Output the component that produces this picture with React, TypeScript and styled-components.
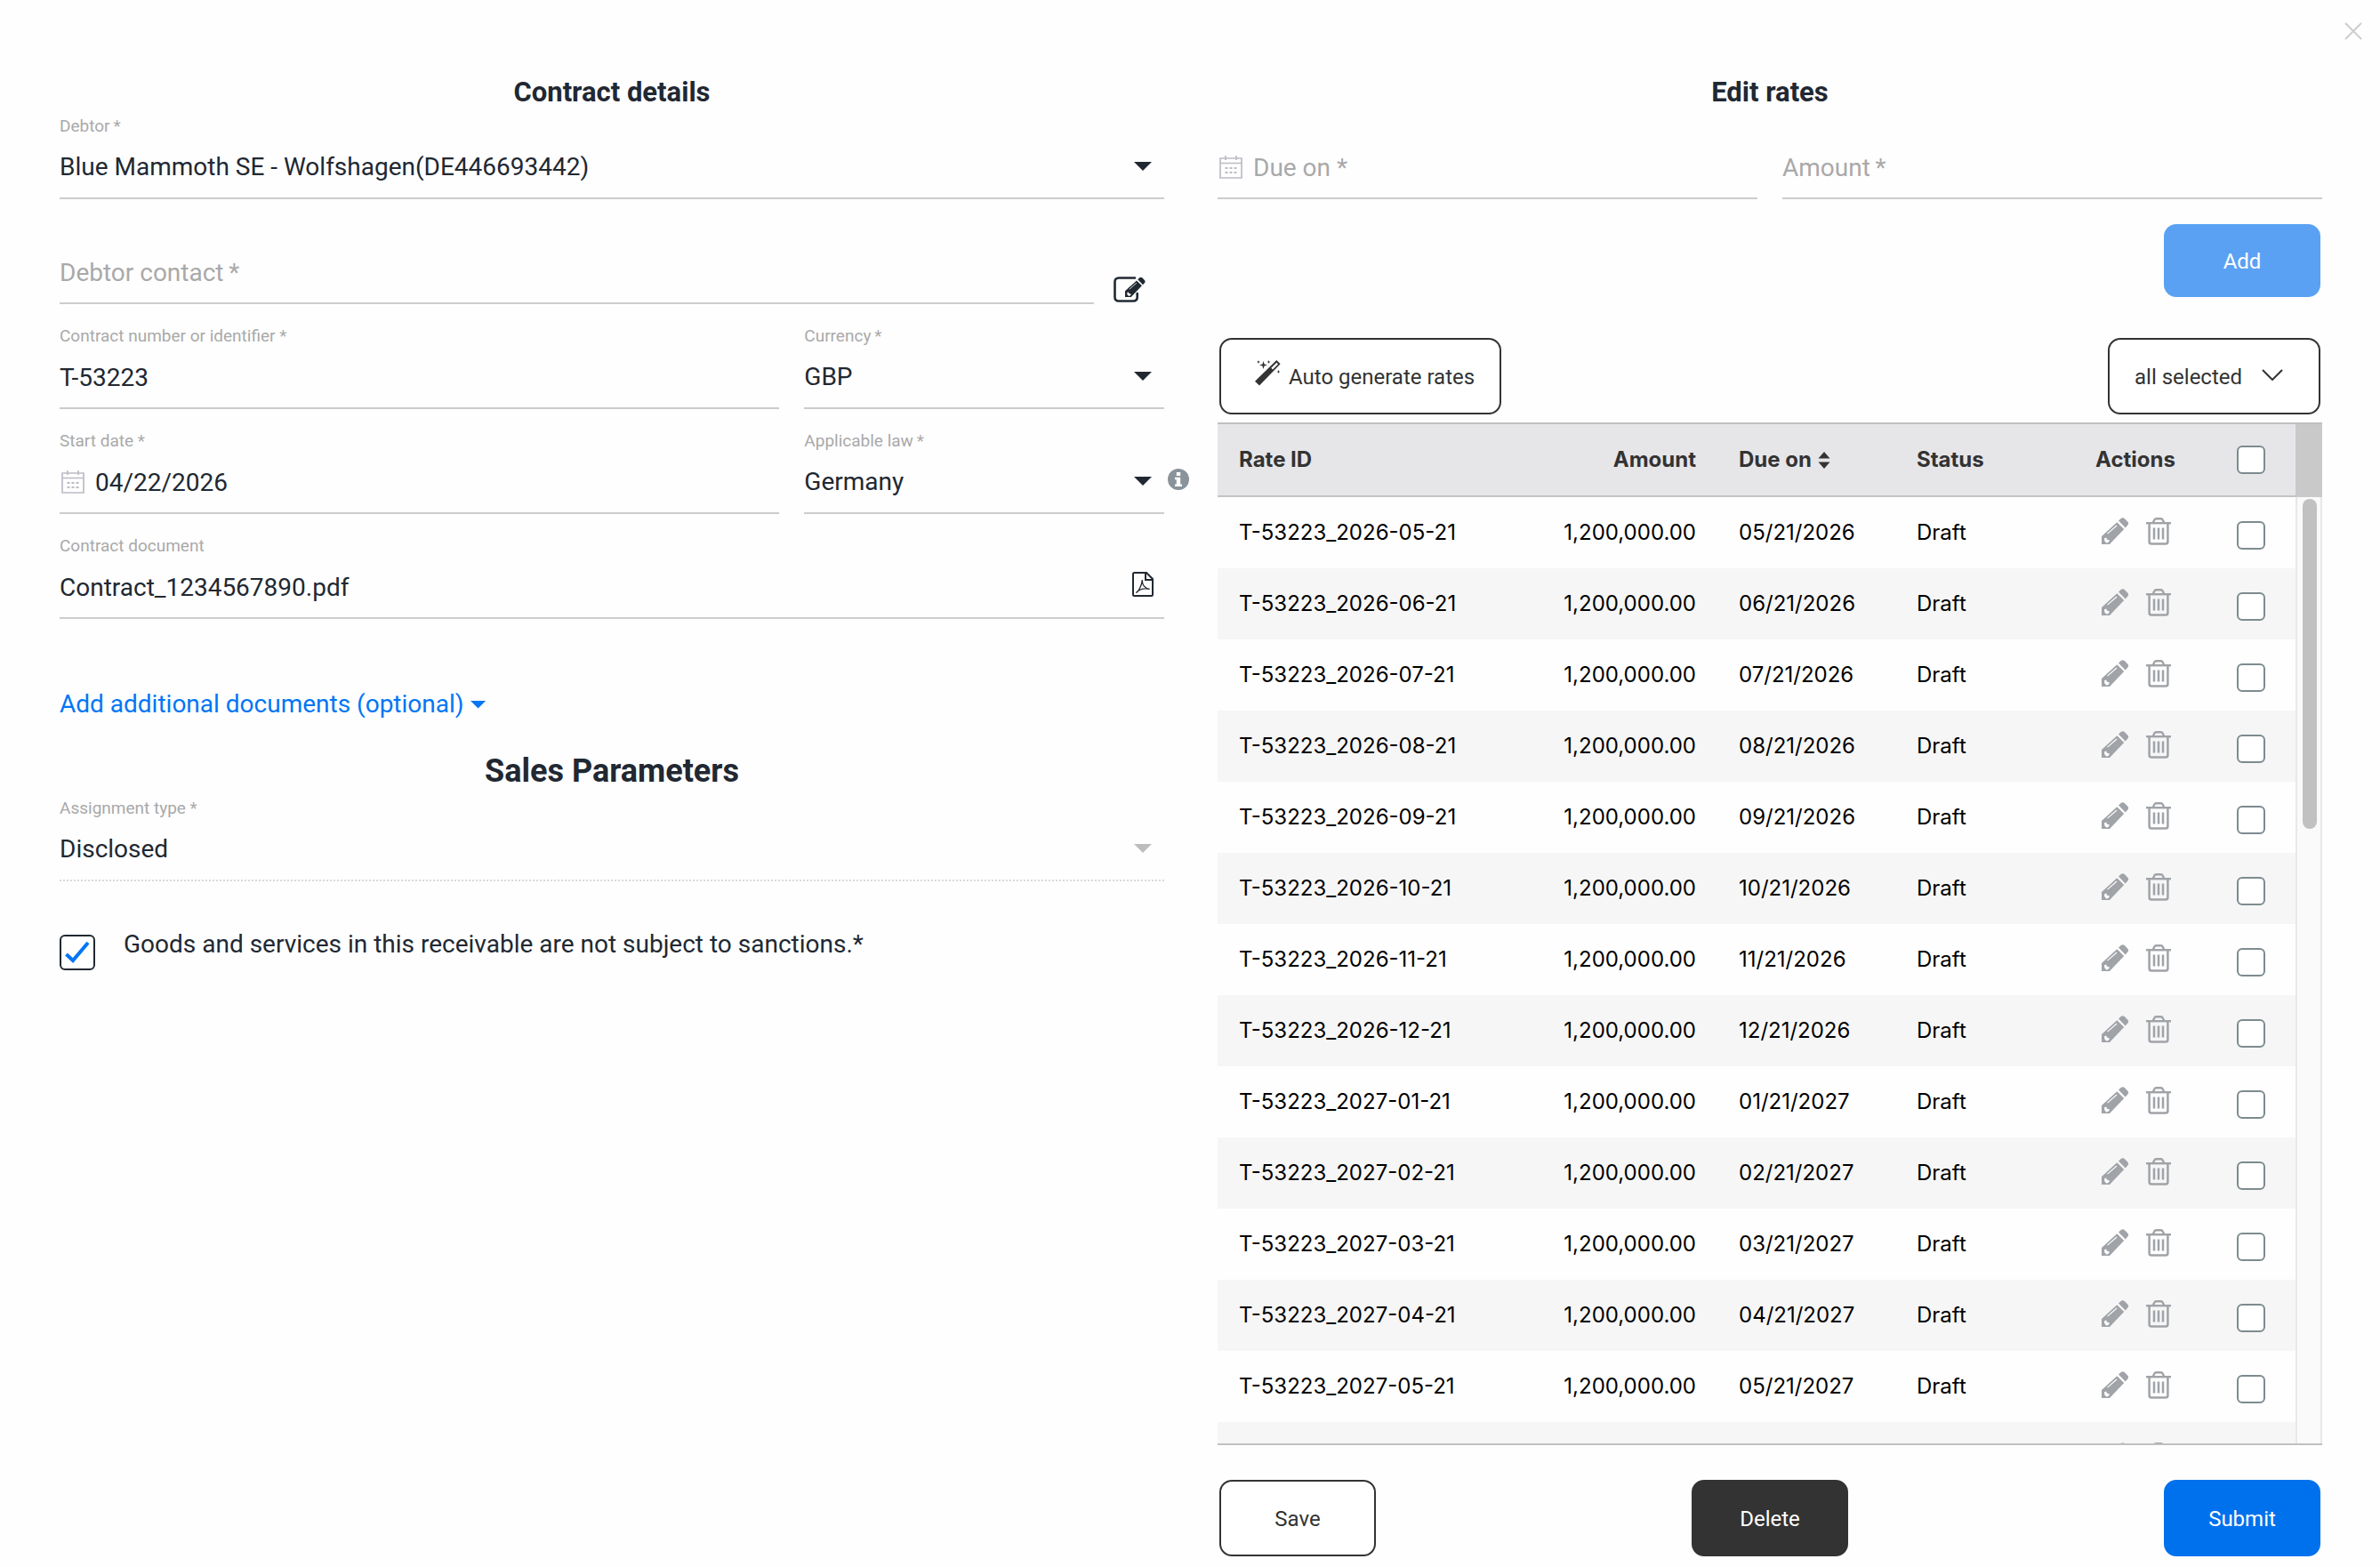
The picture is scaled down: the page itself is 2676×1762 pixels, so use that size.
import React, { useState } from "react";
import styled, { createGlobalStyle } from "styled-components";

const ink = "#212832";
const charcoal = "#333333";
const blue = "#0071ed";
const muted = "#a9a9a9";
const rule = "#cccccc";

const GlobalStyle = createGlobalStyle`
  *, *::before, *::after { box-sizing: border-box; }
  body {
    margin: 0;
    background: #fefefe;
    color: ${ink};
    font-family: Roboto, "Liberation Sans", sans-serif;
    font-size: 28px;
    line-height: 32px;
  }
  button, input, select { font: inherit; color: inherit; }
  button { cursor: pointer; }
`;

const Page = styled.main`
  display: flex;
  flex-direction: column;
  height: 100vh;
  min-height: 1200px;
`;

const TopBar = styled.header`
  display: flex;
  justify-content: flex-end;
  height: 84px;
  padding: 20px 15px;
`;

const IconButton = styled.button`
  display: inline-flex;
  align-items: center;
  justify-content: center;
  padding: 0;
  border: 0;
  background: none;
`;

const CloseButton = styled(IconButton)`
  width: 30px;
  height: 30px;
  color: #cdcdd1;
`;

const Columns = styled.div`
  flex: 1;
  min-height: 0;
  display: grid;
  grid-template-columns: repeat(2, minmax(0, 1fr));
  gap: 60px;
  padding: 0 65px 12px 67px;
`;

const Panel = styled.section`
  display: flex;
  flex-direction: column;
  min-height: 0;
`;

const Heading = styled.h2`
  margin: 0 0 6px;
  font-size: 31px;
  line-height: 40px;
  font-weight: 700;
  text-align: center;
`;

const SubHeading = styled(Heading)`
  margin: 37px 0 8px;
  font-size: 36px;
  line-height: 44px;
`;

const Fields = styled.div`
  display: grid;
  gap: 24px;
`;

const FieldRow = styled.div<{ $columns: string }>`
  display: grid;
  grid-template-columns: ${(p) => p.$columns};
  column-gap: 28px;
`;

const FieldBox = styled.div`
  position: relative;
  display: grid;
  grid-template-rows: 24px 68px;
  border-bottom: 2px solid ${rule};
`;

const DisabledFieldBox = styled(FieldBox)`
  border-bottom: 2px dotted #d9d9d9;
`;

const FieldLabel = styled.label`
  color: ${muted};
  font-size: 19px;
  line-height: 24px;
`;

const Control = styled.div`
  grid-row: 2;
  display: flex;
  align-items: center;
`;

const TextInput = styled.input`
  flex: 1;
  min-width: 0;
  height: 68px;
  padding: 0;
  border: 0;
  outline: 0;
  background: none;
  &::placeholder { color: ${muted}; opacity: 1; }
`;

const SelectInput = styled.select`
  flex: 1;
  min-width: 0;
  height: 68px;
  padding: 0;
  border: 0;
  outline: 0;
  background: none;
  appearance: none;
  &:disabled { color: ${ink}; opacity: 1; }
`;

const Caret = styled.span<{ $muted?: boolean }>`
  width: 20px;
  height: 10px;
  margin: 0 14px 2px 0;
  background: ${(p) => (p.$muted ? "#bdbdbd" : ink)};
  clip-path: polygon(0 0, 100% 0, 50% 100%);
  pointer-events: none;
`;

const CalendarSlot = styled.span`
  display: flex;
  width: 40px;
  padding-left: 2px;
  color: #bcbdc5;
`;

const FileSlot = styled.span`
  display: flex;
  margin: 0 12px 6px 0;
`;

const InfoButton = styled(IconButton)`
  position: absolute;
  left: 100%;
  bottom: 25px;
  margin-left: 4px;
  color: #8a929a;
`;

const ContactRow = styled.div`
  display: grid;
  grid-template-columns: 1fr 79px;
  align-items: end;
`;

const EditButton = styled(IconButton)`
  height: 34px;
`;

const MoreLink = styled.a`
  display: inline-flex;
  align-items: center;
  align-self: flex-start;
  gap: 7px;
  margin-top: 80px;
  color: #0076f5;
  text-decoration: none;
`;

const LinkCaret = styled.span`
  width: 18px;
  height: 9px;
  background: currentColor;
  clip-path: polygon(0 0, 100% 0, 50% 100%);
`;

const ConsentRow = styled.div`
  display: flex;
  gap: 32px;
  margin-top: 55px;
`;

const CheckBox = styled.input`
  appearance: none;
  flex: none;
  width: 32px;
  height: 32px;
  margin: 0;
  border: 2px solid #7d8b8f;
  border-radius: 6px;
  background: #ffffff;
  vertical-align: middle;
  &:checked {
    background: #ffffff url("data:image/svg+xml,%3Csvg xmlns='http://www.w3.org/2000/svg' viewBox='0 0 36 36'%3E%3Cpath d='M5.500 20l7.500 7 17-20' fill='none' stroke='%230076f5' stroke-width='4'/%3E%3C/svg%3E") center / 100% no-repeat;
  }
`;

const ConsentBox = styled(CheckBox)`
  width: 40px;
  height: 40px;
  margin-top: 5px;
  border-color: ${ink};
`;

const Button = styled.button<{ $tone?: "outline" | "dark" | "primary" }>`
  display: inline-flex;
  align-items: center;
  justify-content: center;
  min-width: 176px;
  height: 86px;
  padding: 2px 28px 0;
  border: 2px solid ${(p) => (p.$tone === "primary" ? blue : charcoal)};
  border-radius: 14px;
  background: ${(p) =>
    p.$tone === "primary" ? blue : p.$tone === "dark" ? charcoal : "#ffffff"};
  color: ${(p) => (p.$tone ? "#ffffff" : charcoal)};
  font-size: 24px;
  line-height: 28px;
`;

const AddRow = styled.div`
  display: flex;
  justify-content: flex-end;
  margin-top: 28px;
  padding: 0 2px;
`;

const AddButton = styled(Button)`
  height: 82px;
  border: 0;
  background: #5aa1f3;
  &:disabled { cursor: default; }
`;

const Toolbar = styled.div`
  display: flex;
  justify-content: space-between;
  margin: 46px 0 9px;
  padding: 0 2px;
`;

const GenerateButton = styled(Button)`
  gap: 9px;
  padding: 2px 28px 0 38px;
`;

const WandSlot = styled.span`
  display: flex;
  margin-bottom: 10px;
`;

const FilterBox = styled.div`
  display: grid;
  align-items: center;
  width: 239px;
  height: 86px;
  border: 2px solid ${charcoal};
  border-radius: 14px;
  background: #ffffff;
  color: ${charcoal};
  font-size: 24px;
  line-height: 28px;
  & > * { grid-area: 1 / 1; }
`;

const FilterSelect = styled.select`
  height: 82px;
  padding: 2px 28px 0;
  border: 0;
  outline: 0;
  background: none;
  appearance: none;
`;

const ChevronSlot = styled.span`
  display: flex;
  justify-self: end;
  margin: 0 40px 4px 0;
  pointer-events: none;
`;

const TableFrame = styled.div`
  flex: 1;
  min-height: 0;
  display: grid;
  grid-template-columns: 1fr 30px;
  border: solid #c0c0c0;
  border-width: 2px 0;
`;

const ScrollArea = styled.div`
  min-height: 0;
  overflow-y: auto;
  scrollbar-width: none;
`;

const Rail = styled.div`
  display: grid;
  grid-template-rows: 82px 1fr;
  min-height: 0;
`;

const RailHead = styled.div`
  background: #c9c9c9;
`;

const RailTrack = styled.div`
  padding: 2px 4px 2px 6px;
  border: solid #e8e8e8;
  border-width: 0 2px;
  background: #fafafa;
`;

const RailThumb = styled.div`
  height: 35%;
  border-radius: 8px;
  background: #c1c1c1;
`;

const Table = styled.table`
  width: 100%;
  border-collapse: separate;
  border-spacing: 0;
  table-layout: fixed;
  color: #000000;
  font-family: Inter, "Liberation Sans", sans-serif;
  font-size: 24px;
  line-height: 30px;
`;

type Align = "left" | "right" | "center";

const HeadCell = styled.th<{ $align?: Align; $width?: number }>`
  position: sticky;
  top: 0;
  width: ${(p) => (p.$width ? `${p.$width}px` : "auto")};
  height: 82px;
  padding: 0 24px;
  border-bottom: 2px solid #c4c4c4;
  background: #e6e6e9;
  color: ${charcoal};
  font-weight: 700;
  text-align: ${(p) => p.$align ?? "left"};
`;

const BodyRow = styled.tr`
  &:nth-child(even) { background: #f6f6f6; }
`;

const Cell = styled.td<{ $align?: Align }>`
  height: 80px;
  padding: 0 24px;
  text-align: ${(p) => p.$align ?? "left"};
  white-space: nowrap;
`;

const CheckCell = styled(Cell)`
  padding-top: 6px;
`;

const SortButton = styled(IconButton)`
  gap: 7px;
  font-weight: 700;
`;

const Actions = styled.div`
  display: flex;
  justify-content: center;
  gap: 19px;
  padding: 0 0 4px 2px;
  color: #a0a3a8;
`;

const Footer = styled.footer`
  display: flex;
  justify-content: space-between;
  margin-top: 39px;
  padding: 0 2px;
`;

const CloseIcon = () => (
  <svg width="20" height="20" viewBox="0 0 20 20" stroke="currentColor" strokeWidth="2" strokeLinecap="round" aria-hidden="true">
    <path d="M1.500 1.500l17 17M18.500 1.500l-17 17" />
  </svg>
);

const CalendarIcon = () => (
  <svg width="26" height="26" viewBox="0 0 26 26" fill="none" stroke="currentColor" strokeWidth="1.700" aria-hidden="true">
    <path d="M1 3h24v22H1zM1 8.500h24M7 0v5M19 0v5" />
    <path d="M6.500 14h3m2 0h3m2 0h3M6.500 19h3m2 0h3m2 0h3" strokeWidth="2" />
  </svg>
);

const PencilShape = () => (
  <>
    <path d="M17.300 5.200L25.200 13 9 30H0v-9z" fill="currentColor" />
    <path d="M19 3.600l2.700-2.500c1.300-1.200 2.700-1.200 4 0l3.400 3.400c1.300 1.300 1.300 2.700.2 4l-2.600 3z" fill="currentColor" />
    <path d="M6.500 18.200L17 9" stroke="#fff" strokeWidth="1.100" />
    <path d="M3 23.300l2.300-.8.600 2.200 2.500.3.200 2-2.800 1.700-2.400-2.200z" fill="#fff" />
  </>
);

const PencilIcon = () => (
  <svg width="31" height="31" viewBox="0 0 31 31" aria-hidden="true">
    <PencilShape />
  </svg>
);

const TrashIcon = () => (
  <svg width="28" height="31" viewBox="0 0 28 31" fill="none" stroke="currentColor" aria-hidden="true">
    <path d="M0 6.200h28" strokeWidth="2.400" />
    <path d="M8 5.500l1.200-2.700C9.700 1.600 10.300 1.200 11.500 1.200h5c1.200 0 1.800.4 2.300 1.600L20 5.500" strokeWidth="2.400" />
    <path d="M3.600 7v20c0 1.800.9 2.600 2.600 2.600h15.600c1.700 0 2.600-.8 2.600-2.600V7" strokeWidth="2.500" />
    <path d="M9 11.500V24.500M14 11.500V24.500M19 11.500V24.500" strokeWidth="2.500" />
  </svg>
);

const EditIcon = () => (
  <svg width="36" height="29" viewBox="0 0 36 29" aria-hidden="true">
    <path d="M24 1.500H6C3 1.500 1.500 3 1.500 6v17c0 3 1.500 4.500 4.500 4.500h16c3 0 4.700-1.500 4.700-4.500v-4" fill="none" stroke="currentColor" strokeWidth="2.600" strokeLinecap="round" />
    <g transform="translate(13 0.500) scale(0.750)">
      <PencilShape />
    </g>
  </svg>
);

const InfoIcon = () => (
  <svg width="24" height="24" viewBox="0 0 24 24" aria-hidden="true">
    <circle cx="12" cy="12" r="12" fill="currentColor" />
    <path d="M9.800 4h4.400v4H9.800zM8 9.800h6.200v7.700H16V20H8v-2.500h1.800v-5.200H8z" fill="#fff" />
  </svg>
);

const PdfIcon = () => (
  <svg width="24" height="28" viewBox="0 0 24 28" fill="none" stroke="currentColor" aria-hidden="true">
    <path d="M2.500 1H16l7 7v17.500c0 1-.5 1.500-1.500 1.500h-19C1.500 27 1 26.500 1 25.500v-23C1 1.500 1.500 1 2.500 1zM15 1v8h8" strokeWidth="2" />
    <path d="M4.300 23.500c2.700-1 6.700-8.300 7-14.500M11.300 9c-.4 5.800 3.200 10 8.300 10.300M4.300 23.500c4.200-4.300 9-5.500 15.300-4.200" strokeWidth="1.300" />
  </svg>
);

const WandIcon = () => (
  <svg width="29" height="29" viewBox="0 0 29 29" fill="currentColor" aria-hidden="true">
    <path d="M24.300 0L28.600 4.300 5 28.600 0 23.800zM24.300 2.700l-6 6.100 1.700 1.700 6-6.100z" fillRule="evenodd" />
    <path d="M9.500 1l1.100 3.400L14 5.500l-3.400 1.100L9.500 10 8.400 6.600 5 5.500l3.400-1.100z" />
    <path d="M4 0l.6 1.400L6 2l-1.400.6L4 4l-.6-1.400L2 2l1.400-.6zM15.500 0l.6 1.400 1.400.6-1.400.6-.6 1.400-.6-1.400L13.500 2l1.400-.6zM26.500 11l.6 1.400 1.400.6-1.400.6-.6 1.400-.6-1.400-1.400-.6 1.400-.6z" />
  </svg>
);

const ChevronIcon = () => (
  <svg width="24" height="13" viewBox="0 0 24 13" fill="none" stroke="currentColor" strokeWidth="2" aria-hidden="true">
    <path d="M1 1l11 11L23 1" />
  </svg>
);

const SortIcon = () => (
  <svg width="14" height="19" viewBox="0 0 14 19" fill="currentColor" aria-hidden="true">
    <path d="M7 0l6.500 7.500h-13zM7 19L.5 11.500h13z" />
  </svg>
);

interface SelectFieldProps {
  id: string;
  label: string;
  value: string;
  disabled?: boolean;
  children?: React.ReactNode;
}

function SelectField({ id, label, value, disabled, children }: SelectFieldProps) {
  const Box = disabled ? DisabledFieldBox : FieldBox;
  return (
    <Box>
      <FieldLabel htmlFor={id}>{label}</FieldLabel>
      <Control>
        <SelectInput id={id} defaultValue={value} disabled={disabled}>
          <option>{value}</option>
        </SelectInput>
        <Caret $muted={disabled} />
      </Control>
      {children}
    </Box>
  );
}

interface TextFieldProps {
  id: string;
  label?: string;
  value?: string;
  placeholder?: string;
  before?: React.ReactNode;
  after?: React.ReactNode;
}

function TextField({ id, label, value, placeholder, before, after }: TextFieldProps) {
  return (
    <FieldBox>
      {label && <FieldLabel htmlFor={id}>{label}</FieldLabel>}
      <Control>
        {before}
        <TextInput
          id={id}
          type="text"
          defaultValue={value}
          placeholder={placeholder}
          aria-label={label ? undefined : placeholder}
        />
        {after}
      </Control>
    </FieldBox>
  );
}

const rates = [
  ["2026-05-21", "05/21/2026"],
  ["2026-06-21", "06/21/2026"],
  ["2026-07-21", "07/21/2026"],
  ["2026-08-21", "08/21/2026"],
  ["2026-09-21", "09/21/2026"],
  ["2026-10-21", "10/21/2026"],
  ["2026-11-21", "11/21/2026"],
  ["2026-12-21", "12/21/2026"],
  ["2027-01-21", "01/21/2027"],
  ["2027-02-21", "02/21/2027"],
  ["2027-03-21", "03/21/2027"],
  ["2027-04-21", "04/21/2027"],
  ["2027-05-21", "05/21/2027"],
  ["2027-06-21", "06/21/2027"],
].map(([date, due]) => ({ id: `T-53223_${date}`, amount: "1,200,000.00", due, status: "Draft" }));

function RatesTable() {
  const [selected, setSelected] = useState<string[]>([]);
  const toggle = (id: string) =>
    setSelected((ids) => (ids.includes(id) ? ids.filter((i) => i !== id) : [...ids, id]));
  const allSelected = selected.length === rates.length;

  return (
    <TableFrame>
      <ScrollArea>
        <Table>
          <thead>
            <tr>
              <HeadCell>Rate ID</HeadCell>
              <HeadCell $align="right" $width={200}>Amount</HeadCell>
              <HeadCell $width={200}>
                <SortButton type="button">
                  Due on
                  <SortIcon />
                </SortButton>
              </HeadCell>
              <HeadCell $width={190}>Status</HeadCell>
              <HeadCell $align="center" $width={160}>Actions</HeadCell>
              <HeadCell $align="center" $width={100}>
                <CheckBox
                  type="checkbox"
                  aria-label="Select all rates"
                  checked={allSelected}
                  onChange={() => setSelected(allSelected ? [] : rates.map((r) => r.id))}
                />
              </HeadCell>
            </tr>
          </thead>
          <tbody>
            {rates.map((rate) => (
              <BodyRow key={rate.id}>
                <Cell>{rate.id}</Cell>
                <Cell $align="right">{rate.amount}</Cell>
                <Cell>{rate.due}</Cell>
                <Cell>{rate.status}</Cell>
                <Cell>
                  <Actions>
                    <IconButton type="button" aria-label={`Edit ${rate.id}`}>
                      <PencilIcon />
                    </IconButton>
                    <IconButton type="button" aria-label={`Remove ${rate.id}`}>
                      <TrashIcon />
                    </IconButton>
                  </Actions>
                </Cell>
                <CheckCell $align="center">
                  <CheckBox
                    type="checkbox"
                    aria-label={`Select ${rate.id}`}
                    checked={selected.includes(rate.id)}
                    onChange={() => toggle(rate.id)}
                  />
                </CheckCell>
              </BodyRow>
            ))}
          </tbody>
        </Table>
      </ScrollArea>
      <Rail aria-hidden="true">
        <RailHead />
        <RailTrack>
          <RailThumb />
        </RailTrack>
      </Rail>
    </TableFrame>
  );
}

export default function App() {
  return (
    <>
      <GlobalStyle />
      <Page>
        <TopBar>
          <CloseButton type="button" aria-label="Close">
            <CloseIcon />
          </CloseButton>
        </TopBar>
        <Columns>
          <Panel>
            <Heading>Contract details</Heading>
            <Fields>
              <SelectField id="debtor" label={"Debtor\u2009*"} value="Blue Mammoth SE - Wolfshagen(DE446693442)" />
              <ContactRow>
                <TextField id="contact" placeholder={"Debtor contact\u2009*"} />
                <EditButton type="button" aria-label="Edit debtor contact">
                  <EditIcon />
                </EditButton>
              </ContactRow>
              <FieldRow $columns="2fr 1fr">
                <TextField id="number" label="Contract number or identifier *" value="T-53223" />
                <SelectField id="currency" label={"Currency\u2009*"} value="GBP" />
              </FieldRow>
              <FieldRow $columns="2fr 1fr">
                <TextField
                  id="start"
                  label="Start date *"
                  value="04/22/2026"
                  before={<CalendarSlot><CalendarIcon /></CalendarSlot>}
                />
                <SelectField id="law" label={"Applicable law\u2009*"} value="Germany">
                  <InfoButton type="button" aria-label="About applicable law">
                    <InfoIcon />
                  </InfoButton>
                </SelectField>
              </FieldRow>
              <TextField
                id="document"
                label="Contract document"
                value="Contract_1234567890.pdf"
                after={<FileSlot><PdfIcon /></FileSlot>}
              />
            </Fields>
            <MoreLink href="#documents">
              Add additional documents (optional)
              <LinkCaret />
            </MoreLink>
            <SubHeading>Sales Parameters</SubHeading>
            <SelectField id="assignment" label="Assignment type *" value="Disclosed" disabled />
            <ConsentRow>
              <ConsentBox id="consent" type="checkbox" defaultChecked />
              <label htmlFor="consent">
                Goods and services in this receivable are not subject to sanctions.*
              </label>
            </ConsentRow>
          </Panel>
          <Panel>
            <Heading>Edit rates</Heading>
            <FieldRow $columns="1fr 1fr">
              <TextField
                id="due"
                placeholder="Due on *"
                before={<CalendarSlot><CalendarIcon /></CalendarSlot>}
              />
              <TextField id="amount" placeholder={"Amount\u2009*"} />
            </FieldRow>
            <AddRow>
              <AddButton type="button" $tone="primary" disabled>Add</AddButton>
            </AddRow>
            <Toolbar>
              <GenerateButton type="button">
                <WandSlot><WandIcon /></WandSlot>
                Auto generate rates
              </GenerateButton>
              <FilterBox>
                <FilterSelect aria-label="Filter rates" defaultValue="all selected">
                  <option>all selected</option>
                </FilterSelect>
                <ChevronSlot><ChevronIcon /></ChevronSlot>
              </FilterBox>
            </Toolbar>
            <RatesTable />
            <Footer>
              <Button type="button">Save</Button>
              <Button type="button" $tone="dark">Delete</Button>
              <Button type="button" $tone="primary">Submit</Button>
            </Footer>
          </Panel>
        </Columns>
      </Page>
    </>
  );
}
